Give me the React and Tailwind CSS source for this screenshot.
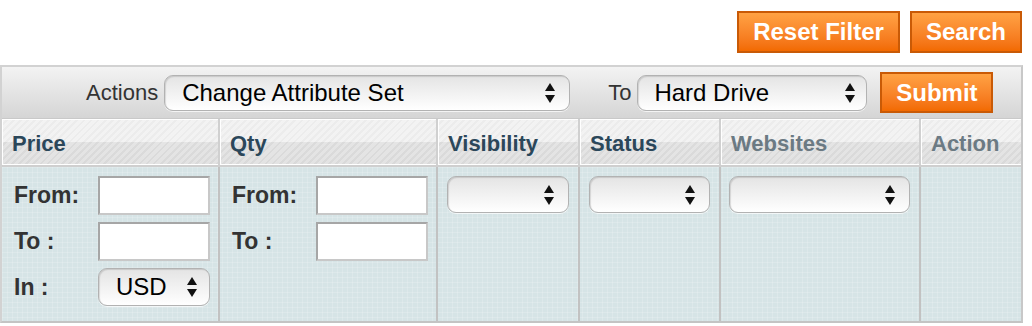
const stripes =
  "bg-[image:linear-gradient(to_bottom,rgba(255,255,255,0.35)_0,rgba(255,255,255,0.35)_50%,rgba(0,0,0,0.03)_50%,rgba(0,0,0,0.04)_100%),repeating-linear-gradient(135deg,#ececec_0,#ececec_3px,#e2e2e2_3px,#e2e2e2_5px)]";

const grid =
  "bg-[#d6e4e6] bg-[image:linear-gradient(rgba(255,255,255,0.16)_1px,transparent_1px),linear-gradient(90deg,rgba(255,255,255,0.16)_1px,transparent_1px)] bg-[size:5px_5px]";

function Arrows() {
  return (
    <svg width="12" height="22" viewBox="0 0 12 22" className="shrink-0">
      <path d="M6 1 L11 9 L1 9 Z" fill="#111" />
      <path d="M1 13 L11 13 L6 21 Z" fill="#111" />
    </svg>
  );
}

function Select({ label, className }) {
  return (
    <div
      className={`flex items-center justify-between rounded-[9px] border border-[#b2b2b2] bg-gradient-to-b from-[#e4e4e4] to-white shadow-[inset_1px_1px_1px_rgba(0,0,0,0.12),0_1px_0_rgba(255,255,255,0.7)] text-[24px] font-normal text-black ${className}`}
    >
      <span className="leading-none">{label}</span>
      <Arrows />
    </div>
  );
}

function OrangeButton({ children, className }) {
  return (
    <button
      className={`flex items-center justify-center border-2 border-[#c95a06] bg-gradient-to-b from-[#ffa243] to-[#f26a00] text-[24px] font-bold text-white leading-none ${className}`}
    >
      {children}
    </button>
  );
}

function Input() {
  return (
    <div className="w-[112px] h-[39px] bg-white border-2 border-t-[#a6a6a6] border-l-[#a6a6a6] border-b-[#c8c8c8] border-r-[#c8c8c8]" />
  );
}

function RangeFields({ currency }) {
  return (
    <div className="grid grid-cols-[84px_112px] gap-y-[7px] items-center text-[23px] font-bold text-[#333]">
      <span>From:</span>
      <Input />
      <span>To :</span>
      <Input />
      {currency && (
        <>
          <span>In :</span>
          <Select label="USD" className="w-[112px] h-[38px] pl-[17px] pr-[11px]" />
        </>
      )}
    </div>
  );
}

const headers = [
  { name: "Price", w: "w-[218px]", dim: false },
  { name: "Qty", w: "w-[218px]", dim: false },
  { name: "Visibility", w: "w-[142px]", dim: false },
  { name: "Status", w: "w-[141px]", dim: false },
  { name: "Websites", w: "w-[200px]", dim: true },
  { name: "Action", w: "w-[100px]", dim: true },
];

export default function App() {
  return (
    <div className="w-[1032px] h-[326px] overflow-hidden bg-white font-['Liberation_Sans',Arial,sans-serif]">
      <div className="flex justify-end gap-[10px] pt-[11px] pr-[10px] h-[65px]">
        <OrangeButton className="w-[163px] h-[42px]">Reset Filter</OrangeButton>
        <OrangeButton className="w-[112px] h-[42px]">Search</OrangeButton>
      </div>

      <div className="w-[1023px] border-2 border-[#d2d2d2] border-b-[#c4c4c4] border-r-[#c8c8c8]">
        <div className="h-[52px] flex items-center pl-[84px] bg-gradient-to-b from-[#f3f3f3] to-[#d5d5d5] border-b border-[#c9c9c9]">
          <span className="text-[22px] text-[#333] mr-[6px]">Actions</span>
          <Select label="Change Attribute Set" className="w-[406px] h-[36px] pl-[17px] pr-[13px]" />
          <span className="text-[22px] text-[#333] ml-[38px] mr-[6px]">To</span>
          <Select label="Hard Drive" className="w-[230px] h-[36px] pl-[16px] pr-[10px]" />
          <OrangeButton className="ml-[13px] w-[113px] h-[41px]">Submit</OrangeButton>
        </div>

        <div className="flex h-[48px] border-b-2 border-[#cfcfcf]">
          {headers.map((h, i) => (
            <div
              key={h.name}
              className={`${h.w} ${stripes} ${i < headers.length - 1 ? "border-r-2 border-[#d0d0d0]" : ""} shadow-[inset_1px_1px_0_#fff,inset_0_-1px_0_#fff] flex items-center pl-[10px] pt-[2px] text-[22px] font-bold ${h.dim ? "text-[#6b7a83]" : "text-[#2b475a]"}`}
            >
              {h.name}
            </div>
          ))}
        </div>

        <div className={`flex h-[154px] ${grid}`}>
          <div className="w-[218px] border-r-2 border-[#c2c2c2] pl-[12px] pt-[9px]">
            <RangeFields currency />
          </div>
          <div className="w-[218px] border-r-2 border-[#c2c2c2] pl-[12px] pt-[9px]">
            <RangeFields />
          </div>
          <div className="w-[142px] border-r-2 border-[#c2c2c2] pl-[9px] pt-[9px]">
            <Select label="" className="w-[122px] h-[37px] pr-[13px]" />
          </div>
          <div className="w-[141px] border-r-2 border-[#c2c2c2] pl-[9px] pt-[9px]">
            <Select label="" className="w-[121px] h-[37px] pr-[13px]" />
          </div>
          <div className="w-[200px] border-r-2 border-[#c2c2c2] pl-[8px] pt-[9px]">
            <Select label="" className="w-[181px] h-[37px] pr-[13px]" />
          </div>
          <div className="w-[100px]" />
        </div>
      </div>
    </div>
  );
}
